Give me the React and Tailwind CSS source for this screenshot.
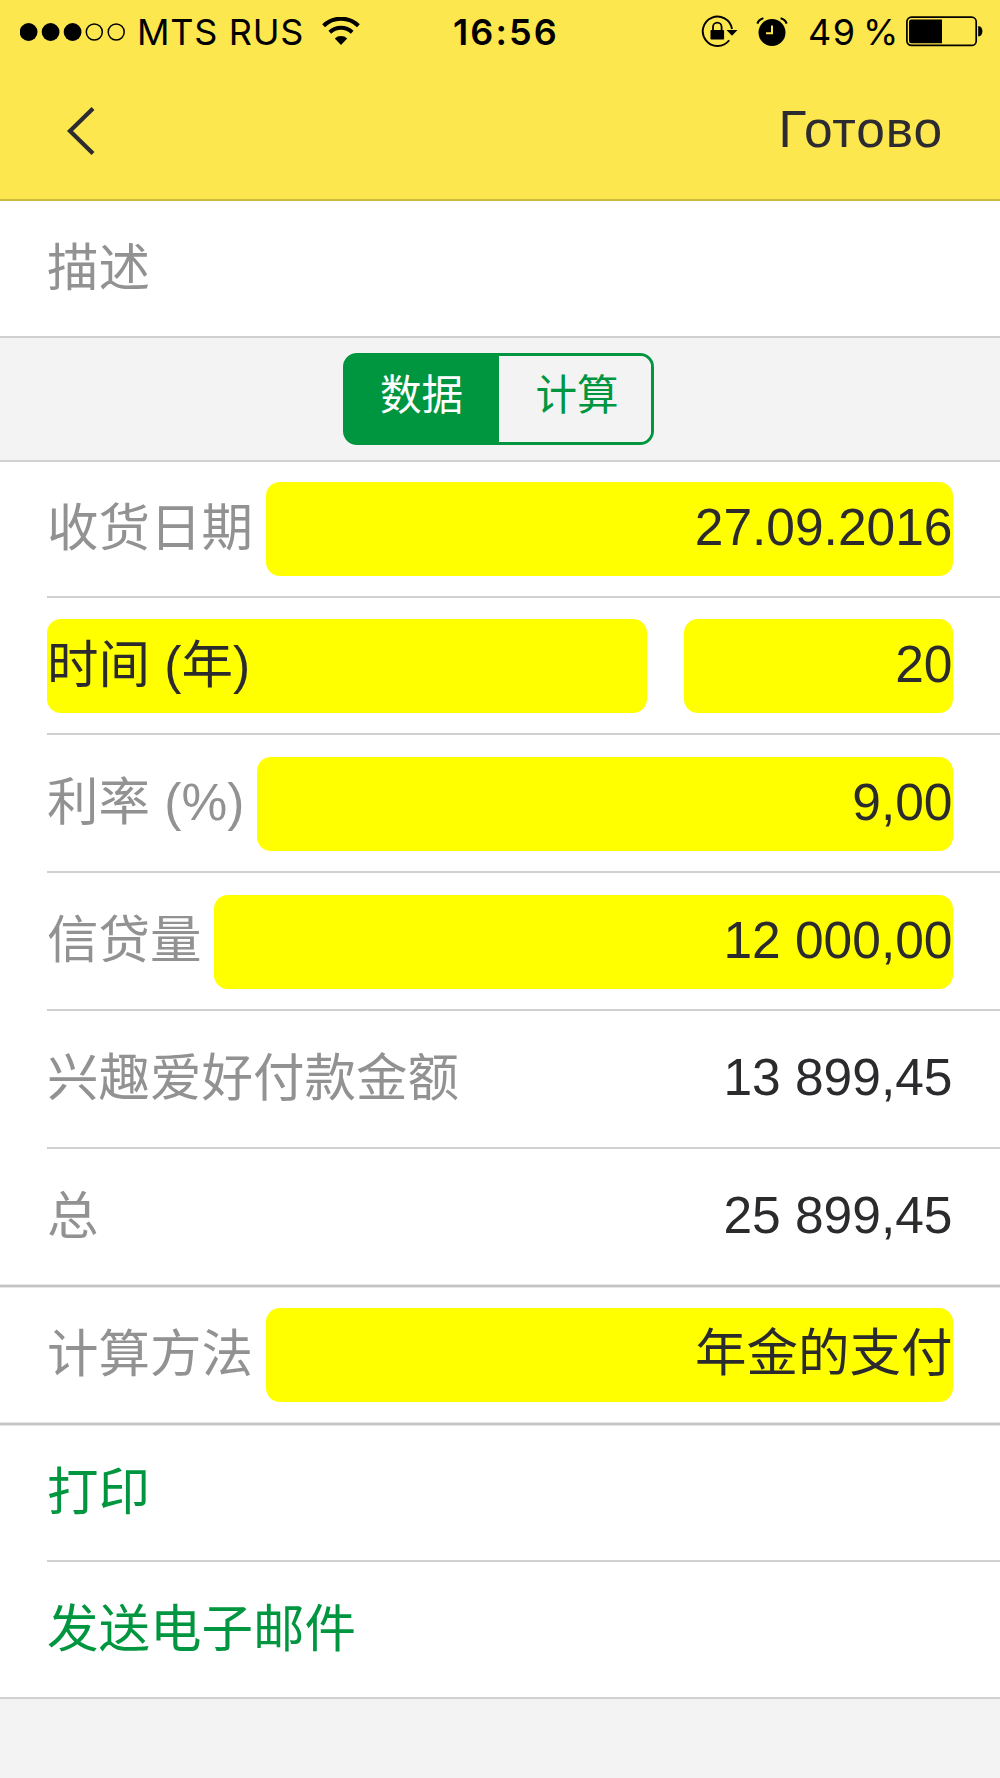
const STACK = "font-['Liberation_Sans','Noto_Sans_CJK_SC',sans-serif]";

function SignalDots() {
  return (
    <svg width="106" height="20" viewBox="0 0 106 20" className="block shrink-0">
      {[8.6, 30.6, 52.6].map((x) => (
        <circle key={x} cx={x} cy="10" r="8.9" fill="#000" />
      ))}
      {[74.3, 96.2].map((x) => (
        <circle key={x} cx={x} cy="10" r="8" fill="none" stroke="#000" strokeWidth="1.5" />
      ))}
    </svg>
  );
}

function Wifi() {
  return (
    <svg width="38" height="29" viewBox="0 0 38 29" className="block shrink-0">
      <path d="M1.6 8.7 A25 25 0 0 1 36.4 8.7" fill="none" stroke="#000" strokeWidth="4" />
      <path d="M7.8 15.2 A16.5 16.5 0 0 1 30.2 15.2" fill="none" stroke="#000" strokeWidth="4" />
      <path d="M19 28 L12.8 21.6 A9 9 0 0 1 25.2 21.6 Z" fill="#000" />
    </svg>
  );
}

function RotationLock() {
  return (
    <svg width="38" height="34" viewBox="0 0 38 34" className="block shrink-0">
      <path d="M31 14 A14.7 14.7 0 1 0 28.2 25.2" fill="none" stroke="#000" strokeWidth="1.9" />
      <path d="M25.5 15 H36.5 L31 20.8 Z" fill="#000" />
      <rect x="9.5" y="15" width="13.6" height="9.6" rx="0.8" fill="#000" />
      <path d="M12 15.5 V12 A4.3 4.3 0 0 1 20.6 12 V15.5" fill="none" stroke="#000" strokeWidth="1.8" />
    </svg>
  );
}

function Alarm() {
  return (
    <svg width="32" height="30" viewBox="0 0 32 30" className="block shrink-0">
      <circle cx="16" cy="15.5" r="13.5" fill="#000" />
      <path d="M1.4 6.6 Q2.6 2.4 7.4 1.2" fill="none" stroke="#000" strokeWidth="2.2" />
      <path d="M30.6 6.6 Q29.4 2.4 24.6 1.2" fill="none" stroke="#000" strokeWidth="2.2" />
      <path d="M16 8.5 V16.2 H10" fill="none" stroke="#fde74f" strokeWidth="2" />
    </svg>
  );
}

function Battery() {
  return (
    <svg width="78" height="31" viewBox="0 0 78 31" className="block shrink-0">
      <rect x="0.9" y="1.2" width="69.3" height="28.2" rx="4.5" fill="none" stroke="#000" strokeWidth="1.7" />
      <path d="M5.5 3.5 H36 V27.2 H5.5 Q3 27.2 3 24.7 V6 Q3 3.5 5.5 3.5 Z" fill="#000" />
      <path d="M72.2 10 Q76.4 10.4 76.4 15.3 Q76.4 20.2 72.2 20.6 Z" fill="#000" />
    </svg>
  );
}

function StatusBar() {
  return (
    <div className="flex h-[63px] items-center pl-5 font-[Inter,sans-serif] text-[36px] leading-[63px] text-black">
      <SignalDots />
      <span className="ml-[11px] w-[185px] whitespace-nowrap pt-[2px] tracking-[0.7px]">MTS RUS</span>
      <Wifi />
      <span className="ml-[93px] w-[248px] whitespace-nowrap pt-[2px] font-semibold tracking-[2.1px]">16:56</span>
      <RotationLock />
      <span className="ml-[17px]"><Alarm /></span>
      <span className="ml-[20px] w-[98px] whitespace-nowrap pt-[2px] tracking-[1.6px] [word-spacing:-5.5px]">49 %</span>
      <Battery />
    </div>
  );
}

function Line({ inset }) {
  return (
    <div className={inset ? "pl-[47px]" : ""}>
      <div className="h-[2px] bg-[#d0d0d0]" />
    </div>
  );
}

function ThickLine() {
  return <div className="h-[4px] border-y border-[#e6e6e6] bg-[#c4c4c4]" />;
}

function Row({ label, value, filled, height, green, labelPad = "pb-[2px]" }) {
  return (
    <div className={`flex items-center pl-[47px] pr-[47.5px] ${height}`}>
      <span className={`shrink-0 whitespace-pre ${labelPad} ${green ? "text-[#009640]" : "text-[#929292]"}`}>{label}</span>
      {value && (
        <div
          className={`ml-[12.5px] flex h-[94px] flex-1 items-center justify-end whitespace-pre rounded-[14px] pb-[4px] text-[#2b2b2e] ${filled ? "bg-[#ffff00]" : ""}`}
        >
          {value}
        </div>
      )}
    </div>
  );
}

export default function App() {
  return (
    <div className={`h-[1778px] w-[1000px] overflow-hidden bg-[#f3f3f3] text-[51.5px] leading-[60px] ${STACK}`}>
      <header className="h-[201px] border-b-2 border-[#cdb93c] bg-[#fde74f]">
        <StatusBar />
        <div className="flex h-[136px] items-center justify-between pl-[66px] pr-[57px] text-[#2b2b30]">
          <svg width="30" height="52" viewBox="0 0 30 52" className="block">
            <path d="M27 3.5 L4 26 L27 48.5" fill="none" stroke="#2b2b30" strokeWidth="4.2" />
          </svg>
          <span className="pb-[4px] tracking-[0.9px]">Готово</span>
        </div>
      </header>
      <main>
        <section className="bg-white">
          <Row label="描述" height="h-[135px]" />
        </section>
        <Line />
        <div className="flex h-[122px] items-center justify-center pr-[3px]">
          <div className="flex h-[92px] w-[311px] overflow-hidden rounded-[14px] border-[3px] border-[#009640] bg-[linear-gradient(to_right,#009640_50%,transparent_50%)] text-[41.6px]">
            <div className="flex w-[153px] items-center justify-center bg-[#009640] pr-[2px] pb-[6px] text-white">数据</div>
            <div className="flex flex-1 items-center justify-center bg-[#f3f3f3] pb-[6px] pl-[4px] text-[#009640]">计算</div>
          </div>
        </div>
        <Line />
        <section className="bg-white">
          <Row label="收货日期" value="27.09.2016" filled height="h-[134px]" />
          <Line inset />
          <div className="flex h-[135px] items-center pt-[1px] pl-[47px] pr-[47.5px] text-[#2b2b2e]">
            <div className="flex h-[94px] w-[599.5px] items-center whitespace-pre rounded-[14px] bg-[#ffff00] pb-[3px]">时间 (年)</div>
            <div className="ml-[37.5px] flex h-[94px] flex-1 items-center justify-end rounded-[14px] bg-[#ffff00] pb-[4px]">20</div>
          </div>
          <Line inset />
          <Row label="利率 (%)" value="9,00" filled height="h-[136px] pt-[2px]" labelPad="pb-[4px]" />
          <Line inset />
          <Row label="信贷量" value="12 000,00" filled height="h-[136px] pt-[2px]" labelPad="pb-[4px]" />
          <Line inset />
          <Row label="兴趣爱好付款金额" value="13 899,45" height="h-[136px]" />
          <Line inset />
          <Row label="总" value="25 899,45" height="h-[135px]" />
          <ThickLine />
          <Row label="计算方法" value="年金的支付" filled height="h-[134px]" />
          <ThickLine />
          <Row label="打印" green height="h-[134px]" />
          <Line inset />
          <Row label="发送电子邮件" green height="h-[135px]" />
        </section>
        <Line />
      </main>
    </div>
  );
}
